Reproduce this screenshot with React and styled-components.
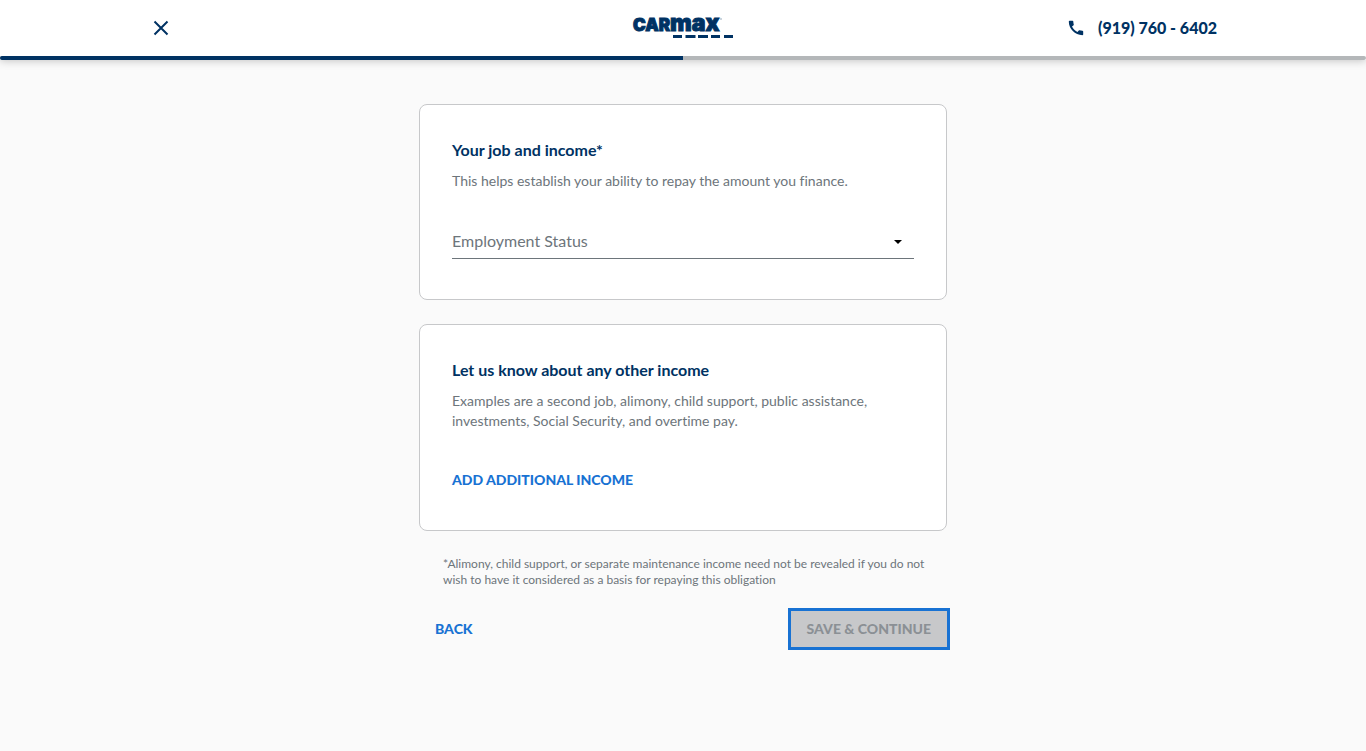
import React, { useState } from "react";
import styled, { createGlobalStyle } from "styled-components";

const navy = "#003263";
const blue = "#1872d3";
const gray = "#6d757b";
const actionFont = "900 14px/20px Lato, sans-serif";

const GlobalStyle = createGlobalStyle`
  *, *::before, *::after { box-sizing: border-box; }
  body {
    margin: 0;
    min-height: 100vh;
    background: #fafafa;
    color: ${gray};
    font-family: Lato, "Liberation Sans", sans-serif;
    font-variant-ligatures: none;
  }
`;

const Header = styled.header`
  background: #fff;
  box-shadow: 0 1px 8px rgba(0, 0, 0, 0.22);
`;

const HeaderBar = styled.div`
  display: grid;
  grid-template-columns: 1fr auto 1fr;
  align-items: center;
  max-width: 1068px;
  height: 56px;
  margin: 0 auto;
`;

const CloseButton = styled.button`
  display: flex;
  justify-self: start;
  padding: 0;
  border: 0;
  background: none;
  color: ${navy};
  cursor: pointer;
`;

const LogoLink = styled.a`
  display: flex;
`;

const PhoneLink = styled.a`
  display: flex;
  align-items: center;
  justify-self: end;
  gap: 14px;
  color: ${navy};
  font: 900 16px/20px Lato, sans-serif;
  text-decoration: none;
`;

const Progress = styled.div`
  height: 4px;
  border-radius: 2px;
  background: #b4b7b9;
  overflow: hidden;
`;

const ProgressFill = styled.div`
  height: 100%;
  background: ${navy};
`;

const Form = styled.form`
  display: flex;
  flex-direction: column;
  max-width: 528px;
  margin: 44px auto 0;
`;

const Card = styled.section`
  margin-bottom: 24px;
  padding: 33px 32px ${(p) => (p.$compact ? "32px" : "40px")};
  border: 1px solid #c7c8ca;
  border-radius: 8px;
  background: #fff;
`;

const CardTitle = styled.h2`
  margin: 0 0 9px;
  color: ${navy};
  font-size: 16px;
  font-weight: 700;
  line-height: 24px;
`;

const CardText = styled.p`
  margin: 0;
  font-size: 14px;
  line-height: 20px;
`;

const SelectField = styled.div`
  display: grid;
  align-items: center;
  margin-top: 32px;
  border-bottom: 1px solid ${gray};

  > * { grid-area: 1 / 1; }
`;

const FieldLabel = styled.label`
  font-size: 16px;
  line-height: 24px;
  pointer-events: none;
  visibility: ${(p) => (p.$filled ? "hidden" : "visible")};
  z-index: 1;
`;

const Select = styled.select`
  width: 100%;
  height: 35px;
  padding: 0;
  border: 0;
  background: transparent;
  color: ${navy};
  font: 400 16px/24px Lato, sans-serif;
  appearance: none;
`;

const Caret = styled.svg`
  justify-self: end;
  margin: 2px 12px 0 0;
  pointer-events: none;
`;

const TextButton = styled.button`
  padding: 8px ${(p) => (p.$inset ? "16px" : "0")};
  border: 0;
  background: none;
  color: ${blue};
  font: ${actionFont};
  cursor: pointer;
`;

const AddRow = styled.div`
  display: flex;
  margin-top: 31px;
`;

const Note = styled.p`
  margin: 1px 16px 0 24px;
  font-size: 12px;
  line-height: 16px;
`;

const Actions = styled.div`
  display: flex;
  justify-content: space-between;
  margin: 23px 0 24px;
`;

const SaveButton = styled.button`
  height: 36px;
  padding: 0 16px;
  border: 0;
  outline: 3px solid ${blue};
  background: #c7c8ca;
  color: #8b9095;
  font: ${actionFont};
`;

function Logo() {
  return (
    <svg width="104" height="40" viewBox="-2 -8 104 40" role="img" aria-label="CarMax" fill={navy}>
      <text x="0" y="15" fontFamily="Inter, sans-serif" fontWeight="900" fontSize="17" stroke={navy} strokeWidth="1">
        CAR<tspan fontSize="23">max</tspan>
      </text>
      <circle cx="88" cy="3" r="1" fill="#b9c5d1" />
      <path d="M40 19h9v3h-9zM52.500 19h10v3h-10zM65 19h10v3h-10zM78 19h9v3h-9zM91 19h9v3h-9z" />
    </svg>
  );
}

export default function App() {
  const [status, setStatus] = useState("");
  return (
    <>
      <GlobalStyle />
      <Header>
        <HeaderBar>
          <CloseButton type="button" aria-label="Close">
            <svg width="24" height="24" viewBox="0 0 24 24" fill="none" stroke="currentColor" strokeWidth="2">
              <path d="M5.500 5.500 18.500 18.500M18.500 5.500 5.500 18.500" />
            </svg>
          </CloseButton>
          <LogoLink href="#"><Logo /></LogoLink>
          <PhoneLink href="tel:+19197606402">
            <svg width="16" height="16" viewBox="2 2 20 20" fill="currentColor" aria-hidden="true">
              <path d="M20.010 15.380c-1.230 0-2.420-.2-3.530-.56a.977.977 0 0 0-1.010.24l-1.570 1.970c-2.830-1.350-5.480-3.900-6.890-6.830l1.950-1.660c.27-.28.35-.67.24-1.020-.37-1.110-.56-2.300-.56-3.530 0-.54-.45-.99-.99-.99H4.190C3.650 3 3 3.240 3 3.990 3 13.280 10.730 21 20.010 21c.71 0 .99-.63.99-1.180v-3.450c0-.54-.45-.99-.99-.99z" />
            </svg>
            (919) 760 - 6402
          </PhoneLink>
        </HeaderBar>
        <Progress role="progressbar" aria-label="Application progress" aria-valuenow={50} aria-valuemin={0} aria-valuemax={100}>
          <ProgressFill style={{ width: "50%" }} />
        </Progress>
      </Header>
      <main>
        <Form>
          <Card>
            <CardTitle>Your job and income*</CardTitle>
            <CardText>This helps establish your ability to repay the amount you finance.</CardText>
            <SelectField>
              <FieldLabel htmlFor="employment" $filled={status !== ""}>Employment Status</FieldLabel>
              <Select id="employment" value={status} onChange={(e) => setStatus(e.target.value)}>
                <option value="" />
                <option value="employed">Employed</option>
                <option value="self">Self-employed</option>
                <option value="retired">Retired</option>
              </Select>
              <Caret width="8" height="4" viewBox="0 0 8 4" aria-hidden="true">
                <path d="M0 0h8L4 4z" fill="#000" />
              </Caret>
            </SelectField>
          </Card>
          <Card $compact>
            <CardTitle>Let us know about any other income</CardTitle>
            <CardText>
              Examples are a second job, alimony, child support, public assistance, investments, Social Security, and overtime pay.
            </CardText>
            <AddRow>
              <TextButton type="button">ADD ADDITIONAL INCOME</TextButton>
            </AddRow>
          </Card>
          <Note>
            *Alimony, child support, or separate maintenance income need not be revealed if you do not wish to have it considered as a basis for repaying this obligation
          </Note>
          <Actions>
            <TextButton type="button" $inset>BACK</TextButton>
            <SaveButton type="submit" disabled>SAVE &amp; CONTINUE</SaveButton>
          </Actions>
        </Form>
      </main>
    </>
  );
}
